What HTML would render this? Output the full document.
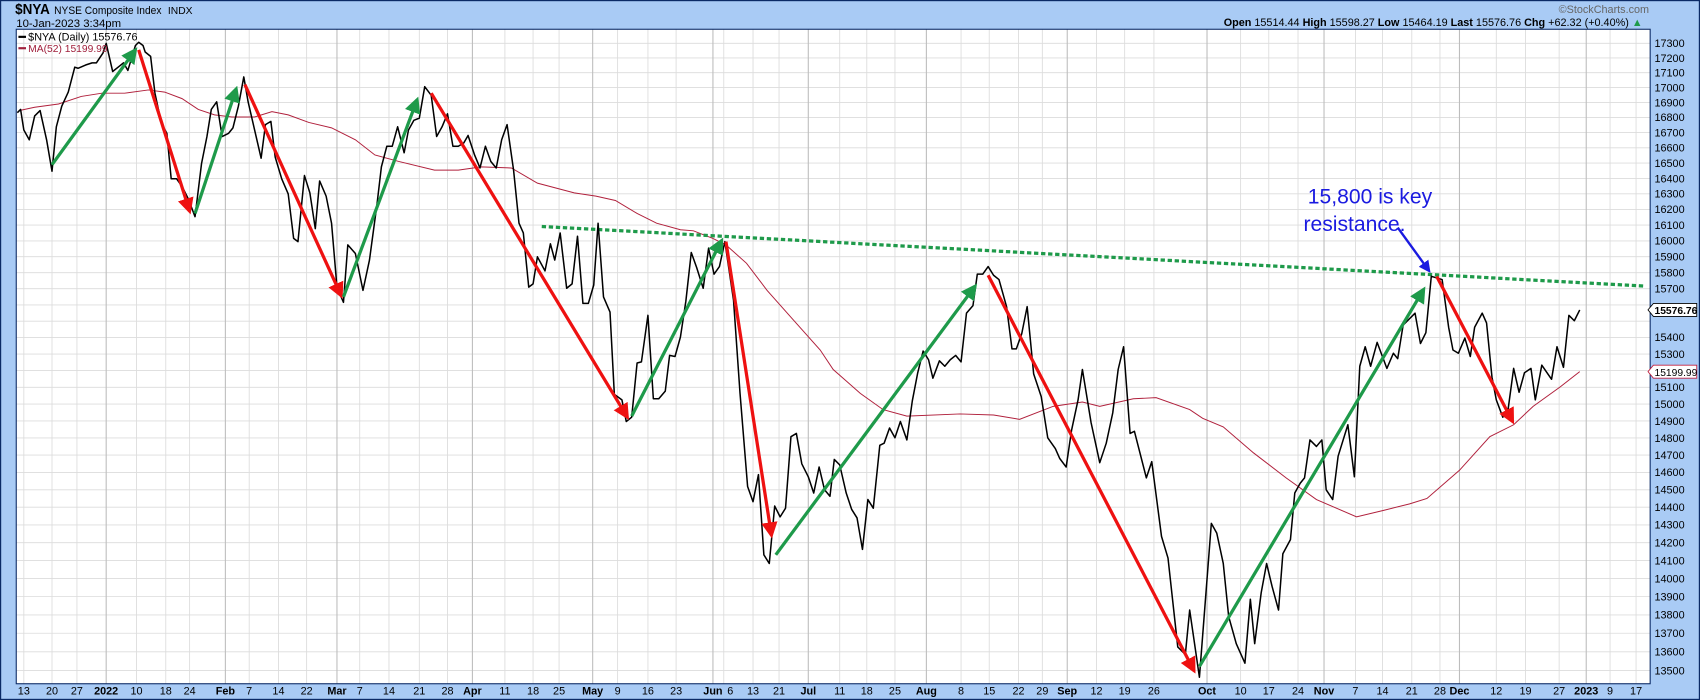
<!DOCTYPE html>
<html><head><meta charset="utf-8"><style>
html,body{margin:0;padding:0;background:#a9cbf5;overflow:hidden}
svg{display:block}
text{font-family:"Liberation Sans",Arial,sans-serif}
</style></head><body>
<svg width="1700" height="700" viewBox="0 0 1569 646" preserveAspectRatio="none" xmlns="http://www.w3.org/2000/svg">
<rect x="0" y="0" width="1569" height="646" fill="#a9cbf5"/>
<rect x="0.5" y="0.5" width="1568" height="645" fill="none" stroke="#0b2a66" stroke-width="1.2"/>
<rect x="15" y="27" width="1508" height="604" fill="#fff"/>
<g stroke="#dcdcdc" stroke-width="0.8">
<line x1="15" x2="1523" y1="40" y2="40"/><line x1="15" x2="1523" y1="53.5" y2="53.5"/><line x1="15" x2="1523" y1="67.1" y2="67.1"/><line x1="15" x2="1523" y1="80.8" y2="80.8"/><line x1="15" x2="1523" y1="94.6" y2="94.6"/><line x1="15" x2="1523" y1="108.4" y2="108.4"/><line x1="15" x2="1523" y1="122.3" y2="122.3"/><line x1="15" x2="1523" y1="136.4" y2="136.4"/><line x1="15" x2="1523" y1="150.5" y2="150.5"/><line x1="15" x2="1523" y1="164.7" y2="164.7"/><line x1="15" x2="1523" y1="178.9" y2="178.9"/><line x1="15" x2="1523" y1="193.3" y2="193.3"/><line x1="15" x2="1523" y1="207.7" y2="207.7"/><line x1="15" x2="1523" y1="222.3" y2="222.3"/><line x1="15" x2="1523" y1="236.9" y2="236.9"/><line x1="15" x2="1523" y1="251.6" y2="251.6"/><line x1="15" x2="1523" y1="266.4" y2="266.4"/><line x1="15" x2="1523" y1="281.4" y2="281.4"/><line x1="15" x2="1523" y1="296.4" y2="296.4"/><line x1="15" x2="1523" y1="311.5" y2="311.5"/><line x1="15" x2="1523" y1="326.7" y2="326.7"/><line x1="15" x2="1523" y1="342" y2="342"/><line x1="15" x2="1523" y1="357.4" y2="357.4"/><line x1="15" x2="1523" y1="372.9" y2="372.9"/><line x1="15" x2="1523" y1="388.5" y2="388.5"/><line x1="15" x2="1523" y1="404.2" y2="404.2"/><line x1="15" x2="1523" y1="420" y2="420"/><line x1="15" x2="1523" y1="436" y2="436"/><line x1="15" x2="1523" y1="452" y2="452"/><line x1="15" x2="1523" y1="468.1" y2="468.1"/><line x1="15" x2="1523" y1="484.4" y2="484.4"/><line x1="15" x2="1523" y1="500.8" y2="500.8"/><line x1="15" x2="1523" y1="517.3" y2="517.3"/><line x1="15" x2="1523" y1="533.9" y2="533.9"/><line x1="15" x2="1523" y1="550.6" y2="550.6"/><line x1="15" x2="1523" y1="567.5" y2="567.5"/><line x1="15" x2="1523" y1="584.4" y2="584.4"/><line x1="15" x2="1523" y1="601.5" y2="601.5"/><line x1="15" x2="1523" y1="618.8" y2="618.8"/>
</g>
<g stroke="#dcdcdc" stroke-width="0.8">
<line x1="22" x2="22" y1="27" y2="631"/><line x1="48" x2="48" y1="27" y2="631"/><line x1="71" x2="71" y1="27" y2="631"/><line x1="126" x2="126" y1="27" y2="631"/><line x1="153" x2="153" y1="27" y2="631"/><line x1="175" x2="175" y1="27" y2="631"/><line x1="230" x2="230" y1="27" y2="631"/><line x1="257" x2="257" y1="27" y2="631"/><line x1="283" x2="283" y1="27" y2="631"/><line x1="332" x2="332" y1="27" y2="631"/><line x1="359" x2="359" y1="27" y2="631"/><line x1="387" x2="387" y1="27" y2="631"/><line x1="413" x2="413" y1="27" y2="631"/><line x1="466" x2="466" y1="27" y2="631"/><line x1="492" x2="492" y1="27" y2="631"/><line x1="516" x2="516" y1="27" y2="631"/><line x1="570" x2="570" y1="27" y2="631"/><line x1="598" x2="598" y1="27" y2="631"/><line x1="624" x2="624" y1="27" y2="631"/><line x1="668" x2="668" y1="27" y2="631"/><line x1="695" x2="695" y1="27" y2="631"/><line x1="719" x2="719" y1="27" y2="631"/><line x1="775" x2="775" y1="27" y2="631"/><line x1="800" x2="800" y1="27" y2="631"/><line x1="826" x2="826" y1="27" y2="631"/><line x1="887" x2="887" y1="27" y2="631"/><line x1="913" x2="913" y1="27" y2="631"/><line x1="940" x2="940" y1="27" y2="631"/><line x1="962" x2="962" y1="27" y2="631"/><line x1="1012" x2="1012" y1="27" y2="631"/><line x1="1038" x2="1038" y1="27" y2="631"/><line x1="1065" x2="1065" y1="27" y2="631"/><line x1="1145" x2="1145" y1="27" y2="631"/><line x1="1171" x2="1171" y1="27" y2="631"/><line x1="1198" x2="1198" y1="27" y2="631"/><line x1="1251" x2="1251" y1="27" y2="631"/><line x1="1276" x2="1276" y1="27" y2="631"/><line x1="1303" x2="1303" y1="27" y2="631"/><line x1="1329" x2="1329" y1="27" y2="631"/><line x1="1381" x2="1381" y1="27" y2="631"/><line x1="1408" x2="1408" y1="27" y2="631"/><line x1="1439" x2="1439" y1="27" y2="631"/><line x1="1486" x2="1486" y1="27" y2="631"/><line x1="1510" x2="1510" y1="27" y2="631"/>
</g>
<g stroke="#bdbdbd" stroke-width="1">
<line x1="98" x2="98" y1="27" y2="631"/><line x1="208" x2="208" y1="27" y2="631"/><line x1="311" x2="311" y1="27" y2="631"/><line x1="436" x2="436" y1="27" y2="631"/><line x1="547" x2="547" y1="27" y2="631"/><line x1="658" x2="658" y1="27" y2="631"/><line x1="746" x2="746" y1="27" y2="631"/><line x1="855" x2="855" y1="27" y2="631"/><line x1="985" x2="985" y1="27" y2="631"/><line x1="1114" x2="1114" y1="27" y2="631"/><line x1="1222" x2="1222" y1="27" y2="631"/><line x1="1347" x2="1347" y1="27" y2="631"/><line x1="1464" x2="1464" y1="27" y2="631"/>
</g>
<polyline fill="none" stroke="#b0203c" stroke-width="0.9" points="18,102 32,99 54,96 75,89 94,86 115,86 137,83 152,85 168,91 183,101 198,106 214,108 235,108 251,103 266,106 285,113 306,118 328,129 346,143 368,149 401,157 423,157 444,154 472,155 496,169 530,178 550,181 568,185 588,197 606,206 628,212 640,213 658,220 670,226 689,243 708,268 732,295 757,323 769,341 794,363 815,378 837,384 886,382 917,383 941,387 972,375 999,371 1015,375 1046,368 1067,367 1098,378 1110,386 1129,394 1157,418 1187,441 1215,461 1252,477 1277,471 1301,465 1317,460 1347,434 1375,403 1397,392 1415,375 1440,357 1458,343"/>
<line x1="500" y1="209" x2="1517" y2="264" stroke="#1e9a4a" stroke-width="3" stroke-dasharray="4,2.5"/>
<polyline fill="none" stroke="#000" stroke-width="1.4" stroke-linejoin="round" points="16,104 19,101 22,120 27,129 32,107 37,102 43,129 48,158 52,117 57,98 63,85 69,62 72,63 79,60 85,58 89,58 95,49 98,40 104,66 109,62 114,58 118,65 125,42 128,39 132,42 134,48 139,52 143,86 149,114 154,123 158,165 163,165 168,172 174,184 180,200 186,151 191,126 195,101 200,94 205,126 211,123 215,118 220,98 225,71 229,94 235,120 241,146 245,115 250,112 254,145 260,165 266,179 271,220 275,223 281,162 286,178 291,211 295,167 301,181 306,206 311,265 317,279 321,226 328,234 335,268 341,240 348,188 352,154 357,135 362,135 367,117 373,141 377,120 382,111 387,109 392,80 398,88 403,126 408,117 413,105 418,135 423,135 428,132 432,125 438,143 443,155 448,135 453,149 458,155 463,129 468,115 474,157 479,206 483,215 488,265 492,262 496,237 503,250 508,225 512,240 517,215 523,266 528,262 533,218 538,280 543,280 548,263 552,206 557,274 563,288 567,364 574,369 578,389 583,385 588,335 592,334 598,291 603,368 608,368 614,361 618,328 623,329 628,311 633,278 638,233 643,247 649,266 654,229 659,253 664,246 669,223 677,277 683,363 690,449 695,463 700,438 705,512 710,520 715,467 720,477 725,469 730,403 735,400 740,428 746,440 751,455 756,431 761,452 766,458 770,424 775,429 781,455 786,470 791,478 796,507 801,461 806,469 812,411 816,409 821,395 826,404 831,389 837,406 842,370 847,344 852,324 857,332 861,349 867,333 872,338 877,332 882,328 887,334 892,289 898,282 902,253 907,253 912,246 917,254 922,258 929,283 934,322 938,322 943,308 948,283 954,345 961,366 967,404 974,414 978,423 984,431 989,397 995,369 999,341 1007,390 1015,427 1021,409 1027,381 1032,341 1037,320 1043,400 1047,398 1058,441 1063,426 1072,495 1078,515 1087,597 1094,604 1098,563 1107,625 1118,483 1123,492 1129,520 1134,569 1141,594 1149,612 1154,553 1158,594 1164,547 1169,520 1174,541 1180,563 1184,511 1191,498 1195,455 1200,446 1204,441 1209,406 1215,412 1220,406 1224,452 1230,461 1235,421 1244,392 1250,440 1255,338 1260,320 1265,338 1271,316 1280,340 1286,326 1290,331 1295,300 1306,289 1311,317 1316,307 1321,255 1331,258 1337,302 1341,323 1346,326 1352,312 1357,329 1361,302 1368,289 1372,298 1377,348 1381,369 1387,385 1392,377 1397,340 1402,362 1407,344 1413,340 1417,369 1423,337 1432,350 1437,320 1443,339 1448,291 1453,296 1458,286"/>
<defs>
<marker id="ag" viewBox="0 0 10 10" refX="8" refY="5" markerWidth="5" markerHeight="5" orient="auto"><path d="M0,0 L10,5 L0,10 z" fill="#1e9a4a"/></marker>
<marker id="ar" viewBox="0 0 10 10" refX="8" refY="5" markerWidth="5" markerHeight="5" orient="auto"><path d="M0,0 L10,5 L0,10 z" fill="#ee1111"/></marker>
<marker id="ab" viewBox="0 0 10 10" refX="8" refY="5" markerWidth="5" markerHeight="5" orient="auto"><path d="M0,0 L10,5 L0,10 z" fill="#1a1ae0"/></marker>
</defs>
<g stroke-width="3" fill="none">
<line x1="48" y1="152" x2="125" y2="46" stroke="#1e9a4a" marker-end="url(#ag)"/>
<line x1="128" y1="46" x2="175" y2="195" stroke="#ee1111" marker-end="url(#ar)"/>
<line x1="180" y1="197" x2="218" y2="82" stroke="#1e9a4a" marker-end="url(#ag)"/>
<line x1="226" y1="78" x2="315" y2="273" stroke="#ee1111" marker-end="url(#ar)"/>
<line x1="317" y1="274" x2="385" y2="92" stroke="#1e9a4a" marker-end="url(#ag)"/>
<line x1="398" y1="86" x2="579" y2="385" stroke="#ee1111" marker-end="url(#ar)"/>
<line x1="583" y1="384" x2="666" y2="222" stroke="#1e9a4a" marker-end="url(#ag)"/>
<line x1="670" y1="223" x2="712" y2="494" stroke="#ee1111" marker-end="url(#ar)"/>
<line x1="716" y1="512" x2="900" y2="264" stroke="#1e9a4a" marker-end="url(#ag)"/>
<line x1="912" y1="254" x2="1102" y2="619" stroke="#ee1111" marker-end="url(#ar)"/>
<line x1="1107" y1="615" x2="1314" y2="267" stroke="#1e9a4a" marker-end="url(#ag)"/>
<line x1="1326" y1="255" x2="1396" y2="389" stroke="#ee1111" marker-end="url(#ar)"/>
<line x1="1290" y1="210" x2="1319" y2="250" stroke="#1a1ae0" stroke-width="2.2" marker-end="url(#ab)"/>
</g>
<text x="1207" y="188" font-size="19.5" fill="#1a1ae0">15,800 is key</text>
<text x="1203" y="213" font-size="19.5" fill="#1a1ae0">resistance.</text>
<line x1="17" y1="34" x2="24" y2="34" stroke="#000" stroke-width="2"/>
<text x="26" y="37.5" font-size="10" fill="#000">$NYA (Daily) 15576.76</text>
<line x1="17" y1="44.5" x2="24" y2="44.5" stroke="#a0203c" stroke-width="2"/>
<text x="26" y="48" font-size="9.5" fill="#a0203c">MA(52) 15199.99</text>
<rect x="15" y="27" width="1508" height="604" fill="none" stroke="#0b2a66" stroke-width="1"/>
<text x="14" y="13" font-size="13.5" font-weight="bold" fill="#000" textLength="32" lengthAdjust="spacingAndGlyphs">$NYA</text>
<text x="50" y="13" font-size="10.5" fill="#000" textLength="99" lengthAdjust="spacingAndGlyphs">NYSE Composite Index</text>
<text x="155" y="13" font-size="9.5" fill="#000">INDX</text>
<text x="15" y="25" font-size="10.5" fill="#000">10-Jan-2023 3:34pm</text>
<text x="1522" y="12" font-size="10" fill="#666" text-anchor="end">©StockCharts.com</text>
<text x="1516" y="24" font-size="10" fill="#000" text-anchor="end"><tspan font-weight="bold">Open</tspan> 15514.44 <tspan font-weight="bold">High</tspan> 15598.27 <tspan font-weight="bold">Low</tspan> 15464.19 <tspan font-weight="bold">Last</tspan> 15576.76 <tspan font-weight="bold">Chg</tspan> +62.32 (+0.40%) <tspan fill="#1e9a4a">▲</tspan></text>
<g font-size="10" fill="#000">
<text x="1527" y="43.5">17300</text><text x="1527" y="57">17200</text><text x="1527" y="70.6">17100</text><text x="1527" y="84.3">17000</text><text x="1527" y="98.1">16900</text><text x="1527" y="111.9">16800</text><text x="1527" y="125.8">16700</text><text x="1527" y="139.9">16600</text><text x="1527" y="154">16500</text><text x="1527" y="168.2">16400</text><text x="1527" y="182.4">16300</text><text x="1527" y="196.8">16200</text><text x="1527" y="211.2">16100</text><text x="1527" y="225.8">16000</text><text x="1527" y="240.4">15900</text><text x="1527" y="255.1">15800</text><text x="1527" y="269.9">15700</text><text x="1527" y="314.9">15400</text><text x="1527" y="330.2">15300</text><text x="1527" y="360.9">15100</text><text x="1527" y="376.4">15000</text><text x="1527" y="392">14900</text><text x="1527" y="407.7">14800</text><text x="1527" y="423.5">14700</text><text x="1527" y="439.5">14600</text><text x="1527" y="455.5">14500</text><text x="1527" y="471.6">14400</text><text x="1527" y="487.9">14300</text><text x="1527" y="504.3">14200</text><text x="1527" y="520.8">14100</text><text x="1527" y="537.4">14000</text><text x="1527" y="554.1">13900</text><text x="1527" y="571">13800</text><text x="1527" y="587.9">13700</text><text x="1527" y="605">13600</text><text x="1527" y="622.3">13500</text>
</g>
<path d="M1521,286 L1526,280 L1566,280 L1566,292 L1526,292 z" fill="#fff" stroke="#000" stroke-width="0.8"/>
<text x="1527" y="290" font-size="9.5" font-weight="bold" fill="#000">15576.76</text>
<path d="M1521,343 L1526,337 L1566,337 L1566,349 L1526,349 z" fill="#fff" stroke="#c02040" stroke-width="0.8"/>
<text x="1527" y="347" font-size="9.5" fill="#000">15199.99</text>
<g font-size="10" fill="#000" text-anchor="middle">
<text x="22" y="641">13</text><text x="48" y="641">20</text><text x="71" y="641">27</text><text x="98" y="641" font-weight="bold">2022</text><text x="126" y="641">10</text><text x="153" y="641">18</text><text x="175" y="641">24</text><text x="208" y="641" font-weight="bold">Feb</text><text x="230" y="641">7</text><text x="257" y="641">14</text><text x="283" y="641">22</text><text x="311" y="641" font-weight="bold">Mar</text><text x="332" y="641">7</text><text x="359" y="641">14</text><text x="387" y="641">21</text><text x="413" y="641">28</text><text x="436" y="641" font-weight="bold">Apr</text><text x="466" y="641">11</text><text x="492" y="641">18</text><text x="516" y="641">25</text><text x="547" y="641" font-weight="bold">May</text><text x="570" y="641">9</text><text x="598" y="641">16</text><text x="624" y="641">23</text><text x="658" y="641" font-weight="bold">Jun</text><text x="674" y="641">6</text><text x="695" y="641">13</text><text x="719" y="641">21</text><text x="746" y="641" font-weight="bold">Jul</text><text x="775" y="641">11</text><text x="800" y="641">18</text><text x="826" y="641">25</text><text x="855" y="641" font-weight="bold">Aug</text><text x="887" y="641">8</text><text x="913" y="641">15</text><text x="940" y="641">22</text><text x="962" y="641">29</text><text x="985" y="641" font-weight="bold">Sep</text><text x="1012" y="641">12</text><text x="1038" y="641">19</text><text x="1065" y="641">26</text><text x="1114" y="641" font-weight="bold">Oct</text><text x="1145" y="641">10</text><text x="1171" y="641">17</text><text x="1198" y="641">24</text><text x="1222" y="641" font-weight="bold">Nov</text><text x="1251" y="641">7</text><text x="1276" y="641">14</text><text x="1303" y="641">21</text><text x="1329" y="641">28</text><text x="1347" y="641" font-weight="bold">Dec</text><text x="1381" y="641">12</text><text x="1408" y="641">19</text><text x="1439" y="641">27</text><text x="1464" y="641" font-weight="bold">2023</text><text x="1486" y="641">9</text><text x="1510" y="641">17</text>
</g>
</svg>
</body></html>
